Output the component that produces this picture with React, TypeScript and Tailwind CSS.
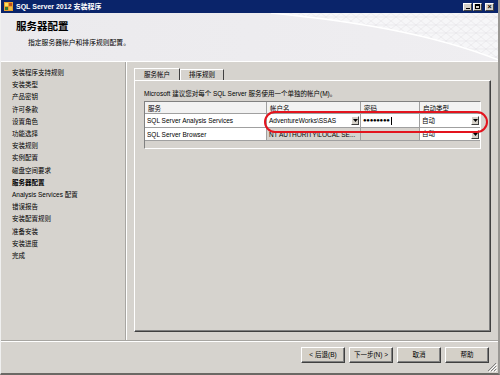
import React from 'react'

const font = '"Liberation Sans", "Noto Sans CJK SC", sans-serif'

const steps = [
  '安装程序支持规则',
  '安装类型',
  '产品密钥',
  '许可条款',
  '设置角色',
  '功能选择',
  '安装规则',
  '实例配置',
  '磁盘空间要求',
  '服务器配置',
  'Analysis Services 配置',
  '错误报告',
  '安装配置规则',
  '准备安装',
  '安装进度',
  '完成',
]

function CaptionButton({ children }: { children: React.ReactNode }) {
  return (
    <div className="flex h-[8px] w-[9px] items-center justify-center border border-t-white border-l-white border-r-[#404040] border-b-[#404040] bg-[#d4d0c8] text-[6px] leading-none text-black">
      {children}
    </div>
  )
}

function DropButton() {
  return (
    <div className="ml-auto flex h-[9px] w-[8px] shrink-0 items-center justify-center border border-t-white border-l-white border-r-[#404040] border-b-[#404040] bg-[#d4d0c8]">
      <svg width="5" height="3" viewBox="0 0 5 3">
        <path d="M0 0h5L2.5 3z" fill="#000" />
      </svg>
    </div>
  )
}

function WizardButton({ label }: { label: string }) {
  return (
    <button className="flex h-[16px] w-[44px] items-center justify-center border border-t-white border-l-white border-r-[#404040] border-b-[#404040] bg-[#d4d0c8] text-[6.5px] text-black shadow-[inset_-1px_-1px_0_#808080]">
      {label}
    </button>
  )
}

function HeaderWave() {
  return (
    <svg className="absolute inset-0" width="500" height="48" viewBox="0 0 500 48">
      <defs>
        <pattern id="mesh" width="10" height="8" patternUnits="userSpaceOnUse">
          <path d="M0 0L10 8M10 0L0 8M0 4h10" stroke="#e4e3e8" strokeWidth="0.6" fill="none" />
        </pattern>
        <linearGradient id="hg" x1="0" y1="0" x2="1" y2="0">
          <stop offset="0" stopColor="#ebeaed" />
          <stop offset="1" stopColor="#efeef1" />
        </linearGradient>
      </defs>
      <rect width="500" height="48" fill="url(#hg)" />
      <path d="M270 0C350 8 430 20 500 48V0z" fill="#f6f6f8" />
      <path d="M270 0C350 8 430 20 500 48V0z" fill="url(#mesh)" />
      <path d="M270 0C350 8 430 20 500 48" stroke="#ffffff" strokeWidth="1.5" fill="none" />
    </svg>
  )
}

export default function App() {
  return (
    <div
      className="flex h-[375px] w-[500px] flex-col overflow-hidden border-l border-l-[#f0f0f0] border-r-2 border-r-[#9a9894] border-b-2 border-b-[#6b6965] bg-[#d6d3ce] text-black"
      style={{ fontFamily: font }}
    >
      {/* title bar */}
      <div className="flex h-[13px] shrink-0 items-center bg-[#0a246a] pl-[3px] pr-[4px]">
        <svg width="9" height="9" viewBox="0 0 9 9">
          <rect x="0" y="0" width="9" height="9" fill="#e8a030" />
          <rect x="1" y="1" width="3" height="3" fill="#f8e060" />
          <rect x="5" y="1" width="3" height="3" fill="#c05020" />
          <rect x="1" y="5" width="3" height="3" fill="#3a7a30" />
          <rect x="5" y="5" width="3" height="3" fill="#f0c040" />
        </svg>
        <span className="ml-[3px] text-[7px] font-bold leading-none text-white">SQL Server 2012 安装程序</span>
        <div className="ml-auto flex gap-[1px]">
          <CaptionButton>
            <span className="mt-[3px] block h-[1px] w-[4px] bg-black" />
          </CaptionButton>
          <CaptionButton>
            <span className="block h-[5px] w-[5px] border border-black border-t-2" />
          </CaptionButton>
          <div className="ml-[2px]">
            <CaptionButton>
              <span className="text-[7px] font-bold leading-none">×</span>
            </CaptionButton>
          </div>
        </div>
      </div>

      {/* header */}
      <div className="relative h-[48px] shrink-0 border-b border-b-[#a8a6a2]">
        <HeaderWave />
        <div className="relative pl-[15px] pt-[6px]">
          <div className="text-[10.5px] font-bold leading-[14px]">服务器配置</div>
          <div className="mt-[5px] pl-[12px] text-[6.8px] leading-[10px]">指定服务器帐户和排序规则配置。</div>
        </div>
      </div>

      {/* body */}
      <div className="flex h-[280px] shrink-0 border-t border-t-white border-b border-b-[#a8a6a2]">
        <div className="w-[125px] shrink-0 border-r border-r-[#a8a6a2] pl-[11px] pt-[5px]">
          {steps.map((s) => (
            <div
              key={s}
              className={`text-[6.5px] leading-[12.2px] ${s === '服务器配置' ? 'font-bold' : ''}`}
            >
              {s}
            </div>
          ))}
        </div>
        <div className="flex flex-1 flex-col border-l border-l-white pb-[8px] pl-[7px] pr-[10px] pt-[6px]">
          {/* tabs */}
          <div className="flex h-[12px] items-end">
            <div className="relative z-10 flex h-[12px] w-[46px] items-center justify-center border border-b-0 border-t-white border-l-white border-r-[#404040] bg-[#d6d3ce] text-[6.5px]">
              服务帐户
            </div>
            <div className="flex h-[11px] w-[44px] items-center justify-center border border-b-0 border-t-white border-l-white border-r-[#404040] text-[6.5px]">
              排序规则
            </div>
          </div>
          <div className="flex-1 border border-t-white border-l-white border-r-[#404040] border-b-[#404040] pl-[9px] pr-[9px] pt-[8px] shadow-[inset_-1px_-1px_0_#808080]">
            <div className="text-[6.5px] leading-[9px]">
              Microsoft 建议您对每个 SQL Server 服务使用一个单独的帐户(M)。
            </div>
            {/* grid */}
            <div className="relative mt-[3px] h-[48px] w-[337px] border border-t-[#808080] border-l-[#808080] border-r-white border-b-white bg-[#d6d3ce]">
              <div className="grid grid-cols-[122px_94px_59px_60px] text-[6.5px]">
                <div className="h-[12px] border-r border-b border-[#a0a0a0] bg-[#f2f2f2] pl-[3px] leading-[14px]">服务</div>
                <div className="h-[12px] border-r border-b border-[#a0a0a0] bg-[#f2f2f2] pl-[3px] leading-[14px]">帐户名</div>
                <div className="h-[12px] border-r border-b border-[#a0a0a0] bg-[#f2f2f2] pl-[3px] leading-[14px]">密码</div>
                <div className="h-[12px] border-b border-[#a0a0a0] bg-[#f2f2f2] pl-[3px] leading-[14px]">启动类型</div>

                <div className="h-[14px] border-r border-b border-[#a0a0a0] bg-white pl-[2px] leading-[14px]">SQL Server Analysis Services</div>
                <div className="flex h-[14px] items-center border-r border-b border-[#a0a0a0] bg-white pl-[2px] pr-[1px]">
                  <span>AdventureWorks\SSAS</span>
                  <DropButton />
                </div>
                <div className="flex h-[14px] items-center border-r border-b border-[#a0a0a0] bg-white pl-[2px]">
                  <span className="text-[6px] tracking-[-0.3px]">●●●●●●●●</span>
                  <span className="ml-[1px] h-[8px] w-[1px] bg-black" />
                </div>
                <div className="flex h-[14px] items-center border-b border-[#a0a0a0] bg-white pl-[2px] pr-[1px]">
                  <span>自动</span>
                  <DropButton />
                </div>

                <div className="h-[13px] border-r border-b border-[#a0a0a0] bg-white pl-[2px] leading-[13px]">SQL Server Browser</div>
                <div className="h-[13px] border-r border-b border-[#a0a0a0] bg-[#d6d3ce] pl-[2px] leading-[13px]">NT AUTHORITY\LOCAL SE...</div>
                <div className="h-[13px] border-r border-b border-[#a0a0a0] bg-[#d6d3ce]" />
                <div className="flex h-[13px] items-center border-b border-[#a0a0a0] bg-white pl-[2px] pr-[1px]">
                  <span>自动</span>
                  <DropButton />
                </div>
              </div>
              {/* highlight */}
              <div className="pointer-events-none absolute left-[119px] top-[9px] h-[22px] w-[224px] rounded-[11px] border-2 border-[#e3141e]" />
            </div>
          </div>
        </div>
      </div>

      {/* buttons */}
      <div className="relative flex flex-1 items-start justify-end border-t border-t-white pr-[9px] pt-[5px]">
        <div className="flex gap-[4px]">
          <WizardButton label="< 后退(B)" />
          <WizardButton label="下一步(N) >" />
          <WizardButton label="取消" />
          <WizardButton label="帮助" />
        </div>
        <svg className="absolute bottom-[1px] right-[1px]" width="10" height="10" viewBox="0 0 10 10">
          <path d="M9 1L1 9M9 4L4 9M9 7L7 9" stroke="#808080" strokeWidth="1" />
          <path d="M10 2L2 10M10 5L5 10M10 8L8 10" stroke="#ffffff" strokeWidth="1" />
        </svg>
      </div>
    </div>
  )
}
